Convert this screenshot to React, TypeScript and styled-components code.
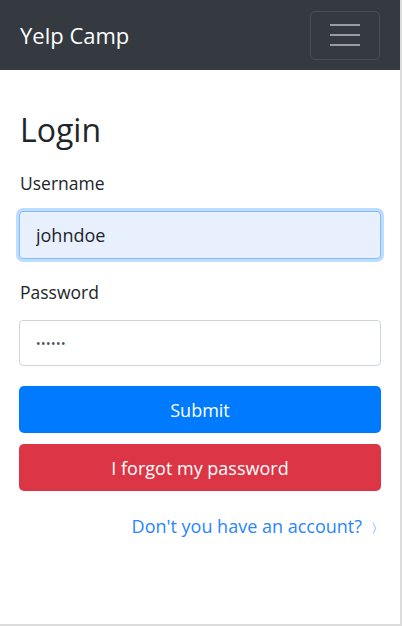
import React from "react";
import styled, { createGlobalStyle } from "styled-components";

const Global = createGlobalStyle`
  html, body { margin: 0; padding: 0; background: #fff; }
  body { font-family: "Open Sans", "Noto Sans", sans-serif; color: #212529; }
  * { box-sizing: border-box; }
`;

const Frame = styled.div`
  width: 402px;
  height: 626px;
  border-right: 2px solid #dcdcdc;
  border-bottom: 2px solid #dcdcdc;
  display: flex;
  flex-direction: column;
  overflow: hidden;
`;

const Navbar = styled.nav`
  height: 70px;
  background: #343a40;
  display: flex;
  align-items: center;
  justify-content: space-between;
  padding: 0 20px;
`;

const Brand = styled.a`
  color: #fff;
  font-size: 22px;
  text-decoration: none;
`;

const Toggler = styled.button`
  width: 70px;
  height: 49px;
  background: transparent;
  border: 1px solid rgba(255, 255, 255, 0.1);
  border-radius: 5px;
  display: flex;
  flex-direction: column;
  align-items: center;
  justify-content: center;
  gap: 8px;
  padding: 0;
`;

const Bar = styled.span`
  display: block;
  width: 30px;
  height: 2px;
  background: rgba(255, 255, 255, 0.5);
`;

const Main = styled.main`
  padding: 0 19px;
  display: flex;
  flex-direction: column;
`;

const Title = styled.h1`
  font-size: 32px;
  font-weight: 500;
  margin: 40px 0 0;
  line-height: 40px;
  padding-left: 1px;
`;

const Form = styled.form`
  display: flex;
  flex-direction: column;
  margin-top: 20px;
`;

const Group = styled.div`
  display: flex;
  flex-direction: column;
  margin-bottom: 20px;
`;

const Label = styled.label`
  font-size: 17.5px;
  line-height: 26px;
  margin-bottom: 15px;
  padding-left: 1px;
`;

const Input = styled.input<{ $focused?: boolean; $secret?: boolean }>`
  height: ${(p) => (p.$focused ? "48px" : "46px")};
  width: 100%;
  padding: 0 16px;
  font-size: ${(p) => (p.$secret ? "12px" : "18px")};
  letter-spacing: ${(p) => (p.$secret ? "0.5px" : "normal")};
  font-family: inherit;
  color: #495057;
  border-radius: 4px;
  border: 1px solid ${(p) => (p.$focused ? "#80bdff" : "#ced4da")};
  background: ${(p) => (p.$focused ? "#e8f0fe" : "#fff")};
  box-shadow: ${(p) => (p.$focused ? "0 0 0 3px rgba(0,123,255,0.25)" : "none")};
  outline: none;
  caret-color: #000;
  &:focus { color: #212529; }
`;

const Button = styled.button<{ $variant: "primary" | "danger" }>`
  height: 47px;
  width: 100%;
  border: none;
  border-radius: 5px;
  color: #fff;
  font-size: 18px;
  font-family: inherit;
  background: ${(p) => (p.$variant === "primary" ? "#007bff" : "#dc3545")};
  margin-bottom: 11px;
`;

const LinkRow = styled.div`
  display: flex;
  justify-content: flex-end;
  align-items: center;
  margin-top: 12px;
  gap: 9px;
`;

const AccountLink = styled.a`
  color: #2a85ff;
  font-size: 18px;
  text-decoration: none;
`;

const Chevron = styled.span`
  color: #2a85ff;
  font-size: 13px;
  margin-top: 4px;
  margin-right: -3px;
`;

export default function App() {
  return (
    <>
      <Global />
      <Frame>
        <Navbar>
          <Brand href="#">Yelp Camp</Brand>
          <Toggler type="button" aria-label="Toggle navigation">
            <Bar />
            <Bar />
            <Bar />
          </Toggler>
        </Navbar>
        <Main>
          <Title>Login</Title>
          <Form onSubmit={(e) => e.preventDefault()}>
            <Group>
              <Label htmlFor="username">Username</Label>
              <Input id="username" $focused autoFocus defaultValue="johndoe" />
            </Group>
            <Group>
              <Label htmlFor="password">Password</Label>
              <Input id="password" type="password" $secret defaultValue="123456" />
            </Group>
            <Button type="submit" $variant="primary">Submit</Button>
            <Button type="button" $variant="danger">I forgot my password</Button>
          </Form>
          <LinkRow>
            <AccountLink href="#">Don't you have an account?</AccountLink>
            <Chevron>〉</Chevron>
          </LinkRow>
        </Main>
      </Frame>
    </>
  );
}
